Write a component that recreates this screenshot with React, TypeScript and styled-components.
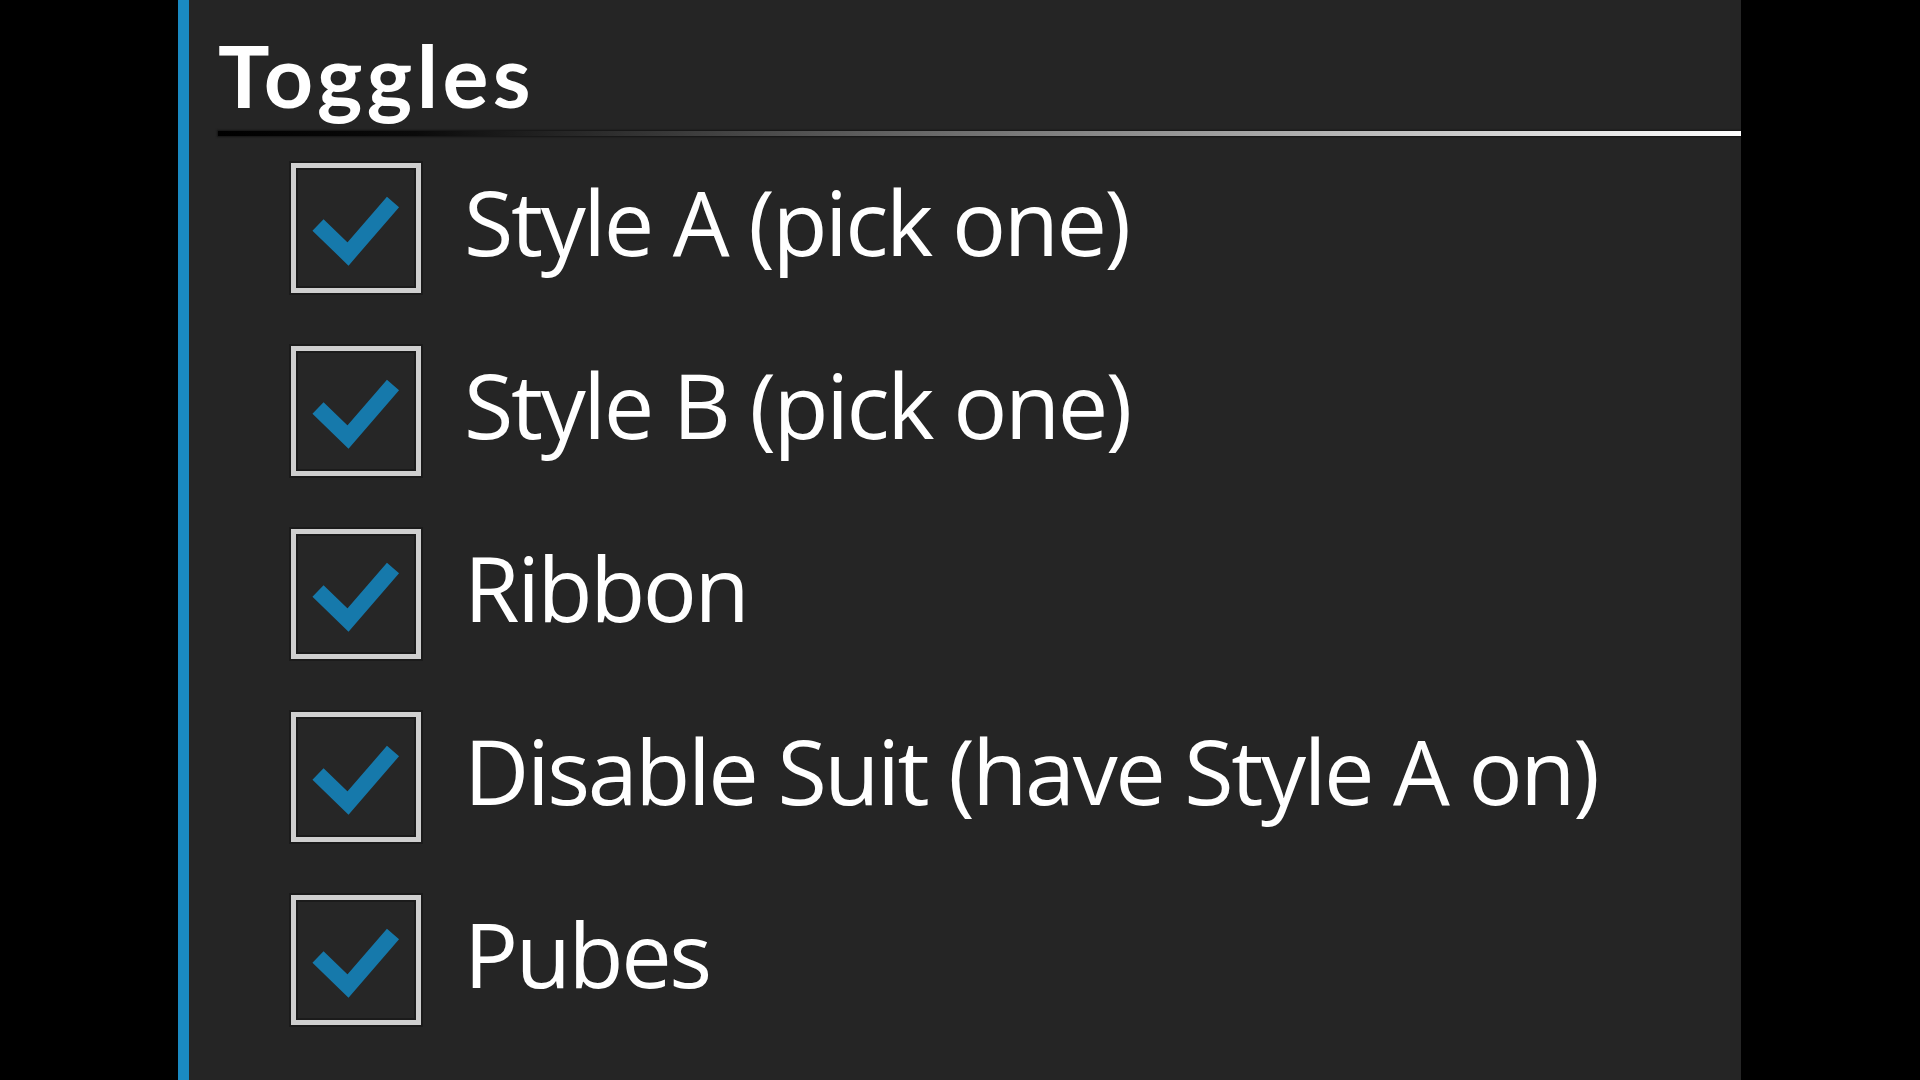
import React from 'react';
import styled, { createGlobalStyle } from 'styled-components';

const GlobalStyle = createGlobalStyle`
  html, body {
    margin: 0;
    padding: 0;
    background: #000;
  }
  body {
    width: 1920px;
    height: 1080px;
    overflow: hidden;
  }
`;

const Screen = styled.div`
  display: flex;
  width: 1920px;
  height: 1080px;
  background: #000;
`;

const Gutter = styled.div<{ $w: number }>`
  flex: none;
  width: ${(p) => p.$w}px;
  background: #000;
`;

const AccentBar = styled.div`
  flex: none;
  width: 11px;
  background: #1a8ac2;
`;

const Panel = styled.section`
  flex: none;
  width: 1552px;
  box-sizing: border-box;
  padding-left: 29px;
  background: #252525;
  display: flex;
  flex-direction: column;
`;

const Heading = styled.h2`
  margin: 0;
  padding-top: 32px;
  font-family: Lato, "Open Sans", sans-serif;
  font-weight: 700;
  font-size: 86px;
  line-height: 86px;
  letter-spacing: 4.4px;
  color: #fff;
`;

const Separator = styled.div`
  margin-top: 13px;
  height: 5px;
  background: linear-gradient(to right, #000 0%, #0a0a0a 13%, #ffffff 100%);
  box-shadow: 0 0 2px 1px #151515;
`;

const List = styled.div`
  display: flex;
  flex-direction: column;
`;

const Row = styled.label`
  display: flex;
  align-items: center;
  gap: 43px;
  height: 183.2px;
  padding-left: 73px;
`;

const Box = styled.span`
  flex: none;
  width: 130px;
  height: 130px;
  box-sizing: border-box;
  border: 5px solid #cfcfcf;
  background: #262626;
  box-shadow: 0 0 0 2px #1b1b1b, inset 0 0 0 2px #1b1b1b;
  display: flex;
`;

const Label = styled.span`
  font-family: "Open Sans", sans-serif;
  font-size: 90px;
  line-height: 90px;
  letter-spacing: -2.4px;
  padding-bottom: 14px;
  color: #fff;
  white-space: nowrap;
`;

const Check = () => (
  <svg width="120" height="120" viewBox="0 0 120 120">
    <polyline
      points="22,57 52,86 97,34"
      fill="none"
      stroke="#1679ab"
      strokeWidth="16"
      strokeLinecap="butt"
      strokeLinejoin="miter"
    />
  </svg>
);

const items = [
  'Style A (pick one)',
  'Style B (pick one)',
  'Ribbon',
  'Disable Suit (have Style A on)',
  'Pubes',
];

export default function App() {
  return (
    <>
      <GlobalStyle />
      <Screen>
        <Gutter $w={178} />
        <AccentBar />
        <Panel>
          <Heading>Toggles</Heading>
          <Separator />
          <List>
            {items.map((t) => (
              <Row key={t}>
                <Box>
                  <Check />
                </Box>
                <Label>{t}</Label>
              </Row>
            ))}
          </List>
        </Panel>
        <Gutter $w={179} />
      </Screen>
    </>
  );
}
